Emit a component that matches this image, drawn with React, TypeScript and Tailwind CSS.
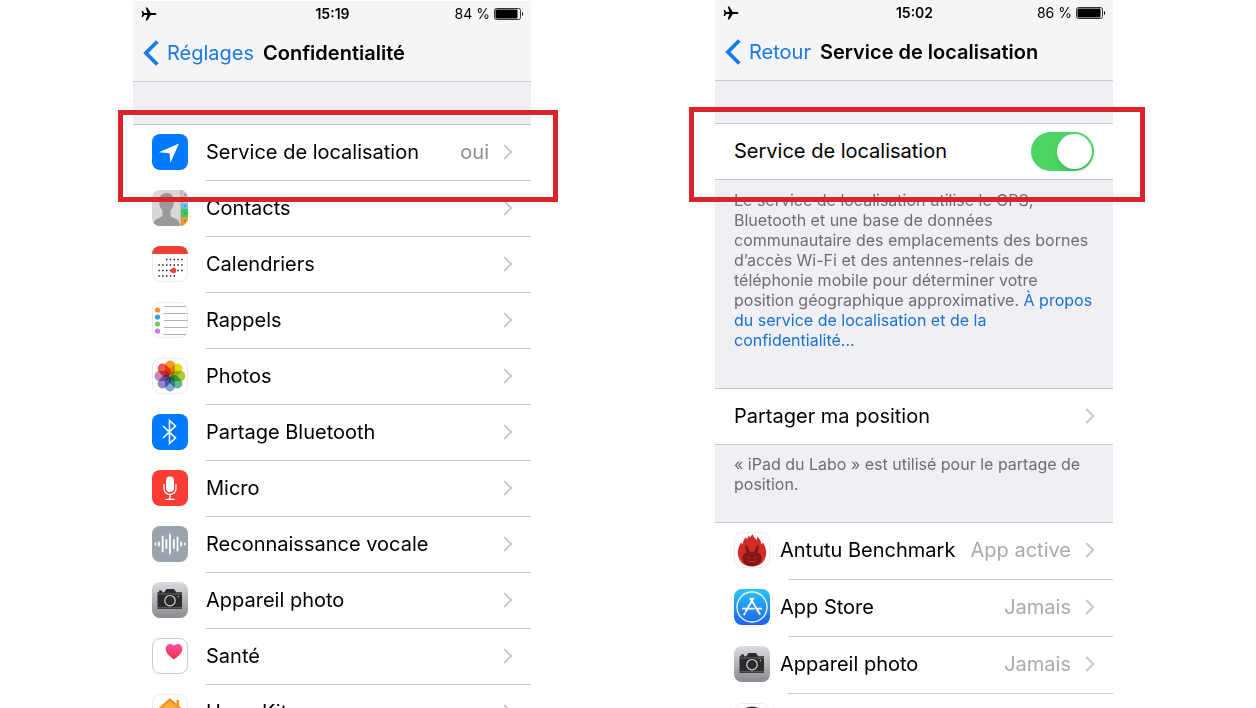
import React, { useState } from "react";

interface RowProps {
  icon?: React.ReactNode;
  label: string;
  value?: string;
  compact?: boolean;
}

interface HeaderProps {
  time: string;
  battery: string;
  level: number;
  back: string;
  title: string;
}

const LocationIcon = () => (
  <svg viewBox="0 0 36 36" className="size-9 shrink-0">
    <rect width="36" height="36" rx="8" fill="#027aff" />
    <path d="M27 9.5 7 18.3l10.6 1L18.3 29z" fill="#fff" />
  </svg>
);

const ContactsIcon = () => (
  <svg viewBox="0 0 36 36" className="size-9 shrink-0">
    <defs>
      <clipPath id="contacts-clip">
        <rect width="36" height="36" rx="8" />
      </clipPath>
    </defs>
    <g clipPath="url(#contacts-clip)">
      <rect width="36" height="36" fill="#d9d8d6" />
      <path
        d="M14.5 3c4.800 0 7.500 3.500 7.300 8.500-.1 4.500-1.300 7-3.300 9.200v4.300c0 1.500 1.500 2.300 4 3.200 3 1 5 2.300 5.500 7.800H1c.5-5.500 2.500-6.800 5.500-7.800 2.500-.9 4-1.700 4-3.200v-4.300c-2-2.200-3.200-4.700-3.300-9.200C7 6.500 9.700 3 14.500 3z"
        fill="#9a9997"
      />
      <rect x="29" width="7" height="13" fill="#c9c8c6" />
      <rect x="29" y="13" width="7" height="6" fill="#5ac8fa" />
      <rect x="29" y="19" width="7" height="8.500" fill="#3fc950" />
      <rect x="29" y="27.500" width="7" height="9" fill="#f59a23" />
      <path d="M29 0v36" stroke="#8c8b89" strokeWidth=".6" />
      <path d="M32 5h2M32 10h2M32 16h2M32 23h2M32 31h2" stroke="#6d6d6d" strokeWidth="1" />
    </g>
  </svg>
);

const CalendarIcon = () => (
  <svg viewBox="0 0 36 36" className="size-9 shrink-0">
    <rect x=".5" y=".5" width="35" height="35" rx="8" fill="#fff" stroke="#ececec" />
    <path d="M0 8a8 8 0 0 1 8-8h20a8 8 0 0 1 8 8z" fill="#ee4035" />
    <g stroke="#111" strokeWidth="1.400" strokeDasharray="1.400 2.400">
      <path d="M14 13.500h17" />
      <path d="M6.400 19h25" />
      <path d="M6.400 24.500h25" />
      <path d="M6.400 30h17" />
    </g>
    <circle cx="21.600" cy="24.500" r="2.700" fill="#ee4035" />
  </svg>
);

const RemindersIcon = () => (
  <svg viewBox="0 0 36 36" className="size-9 shrink-0">
    <rect x=".5" y=".5" width="35" height="35" rx="8" fill="#fff" stroke="#ececec" />
    <path d="M11.500 4.500H34M11.500 11.500h24M11.500 18.500h24M11.500 25.500h24M11.500 32.500H34" stroke="#b5b5b5" />
    <circle cx="5.500" cy="8" r="2.600" fill="#fb8c2d" />
    <circle cx="5.500" cy="15" r="2.600" fill="#38a2e0" />
    <circle cx="5.500" cy="22" r="2.600" fill="#73cb5c" />
    <circle cx="5.500" cy="29" r="2.600" fill="#c67bdc" />
  </svg>
);

const petals = ["#f79a1f", "#e8d70f", "#a5cd3d", "#5bbd8b", "#7fa8dc", "#9585c5", "#c987b8", "#ee5a50"];

const PhotosIcon = () => (
  <svg viewBox="0 0 36 36" className="size-9 shrink-0">
    <rect x=".5" y=".5" width="35" height="35" rx="8" fill="#fff" stroke="#ececec" />
    {petals.map((color, i) => (
      <rect
        key={color}
        x="13"
        y="2.500"
        width="10"
        height="15"
        rx="5"
        fill={color}
        transform={`rotate(${i * 45} 18 18)`}
        className="mix-blend-multiply"
      />
    ))}
  </svg>
);

const BluetoothIcon = () => (
  <svg viewBox="0 0 36 36" className="size-9 shrink-0">
    <rect width="36" height="36" rx="8" fill="#027aff" />
    <path d="m11 12 12.500 12-6 5.500V6.500l6 5.500L11 24" fill="none" stroke="#fff" strokeWidth="1.600" />
  </svg>
);

const MicIcon = () => (
  <svg viewBox="0 0 36 36" className="size-9 shrink-0">
    <rect width="36" height="36" rx="8" fill="#fc3d33" />
    <rect x="14" y="6.500" width="8" height="15.500" rx="4" fill="#fff" />
    <path d="M12 14v4.500a6 6 0 0 0 12 0V14M18 24.500V29M13.500 29.300h9" fill="none" stroke="#fff" strokeWidth="1.300" />
  </svg>
);

const SpeechIcon = () => (
  <svg viewBox="0 0 36 36" className="size-9 shrink-0">
    <rect width="36" height="36" rx="8" fill="#9ba3ad" />
    <path
      d="M3.500 17.500v1M7 16.500v3M10.700 10.500v15M14.400 14v8M18 8.500v19M21.800 14v8M25.500 11.500v13M29.200 16.500v3M32.700 17.500v1"
      stroke="#fff"
      strokeWidth="1.800"
      strokeLinecap="round"
    />
  </svg>
);

const CameraIcon = () => (
  <svg viewBox="0 0 36 36" className="size-9 shrink-0">
    <defs>
      <linearGradient id="camera-bg" x1="0" y1="0" x2="0" y2="1">
        <stop offset="0" stopColor="#dbdcde" />
        <stop offset="1" stopColor="#8a8b90" />
      </linearGradient>
    </defs>
    <rect width="36" height="36" rx="8" fill="url(#camera-bg)" />
    <path d="M7 8.600h3v1.600h2.300L14.500 7h7.500l2.200 3.200H30V27H5.500V10.200H7z" fill="#2b2b2d" />
    <path d="M5.500 12h24.500M5.500 25.800h24.500" stroke="#85868a" strokeWidth=".7" />
    <circle cx="18" cy="18.700" r="6.500" fill="#2b2b2d" />
    <circle cx="18" cy="18.700" r="5.200" fill="none" stroke="#d5d5d7" strokeWidth="1.200" />
    <circle cx="26.500" cy="14.600" r=".8" fill="#e5b33a" />
  </svg>
);

const HealthIcon = () => (
  <svg viewBox="0 0 36 36" className="size-9 shrink-0">
    <defs>
      <linearGradient id="heart" x1="0" y1="0" x2="0" y2="1">
        <stop offset="0" stopColor="#f94fa5" />
        <stop offset="1" stopColor="#f6303b" />
      </linearGradient>
    </defs>
    <rect x=".5" y=".5" width="35" height="35" rx="8" fill="#fff" stroke="#c9c9c9" />
    <path
      d="M22 21.500c-5.200-3.600-8.300-6.700-8.300-10.400 0-2.900 2-5.100 4.600-5.100 1.600 0 2.900.7 3.700 1.900C22.800 6.700 24.100 6 25.700 6c2.600 0 4.600 2.200 4.600 5.100 0 3.700-3.100 6.800-8.300 10.400z"
      fill="url(#heart)"
    />
  </svg>
);

const HomeIcon = () => (
  <svg viewBox="0 0 36 36" className="size-9 shrink-0">
    <rect x=".5" y=".5" width="35" height="35" rx="8" fill="#fff" stroke="#ececec" />
    <path d="M18 4 5 15.500V18h3v11h20V18h3v-2.500l-4-3.500V6h-2.500v3.700z" fill="#f0921f" />
    <path d="m18 7-9 8V26h18V15z" fill="#fbae3c" />
  </svg>
);

const AntutuIcon = () => (
  <svg viewBox="0 0 36 36" className="size-9 shrink-0">
    <rect x=".5" y=".5" width="35" height="35" rx="8" fill="#fff" stroke="#ececec" />
    <path
      d="M18.500 2c.5 2.500 2.500 4.200 4.200 6l.8-3.500c2.500 2.500 3.500 5.500 4 8l1.500-2c2.600 4.500 3.600 8.500 3 12.500C31 30 25.500 34.500 18 34.500S5 30 4 23c-.6-4 .4-8 3-12.500l1.500 2c.5-3 1.500-5.500 3.500-7.500l.8 2.500 2-4 1.200 2z"
      fill="#cf2d25"
    />
    <path
      d="M8.500 26c0-3 1.500-4.700 4.200-5.400l-1.500-5.800c-.4-1.600 1.600-2.200 2.300-.6l2 5.800c1.600-.3 3.400-.3 5 0l2-5.800c.7-1.600 2.700-1 2.300.6l-1.500 5.800c2.700.7 4.200 2.400 4.200 5.400 0 4.800-4 8-9.500 8s-9.500-3.200-9.500-8z"
      fill="#851417"
    />
    <path d="m13 25 3 1M23 25l-3 1M14.500 29c2.300 1 4.700 1 7 0" stroke="#c93a33" strokeWidth=".9" fill="none" />
  </svg>
);

const AppStoreIcon = () => (
  <svg viewBox="0 0 36 36" className="size-9 shrink-0">
    <defs>
      <linearGradient id="store-bg" x1="0" y1="0" x2="0" y2="1">
        <stop offset="0" stopColor="#2bc5f6" />
        <stop offset="1" stopColor="#1d62f0" />
      </linearGradient>
    </defs>
    <rect width="36" height="36" rx="8" fill="url(#store-bg)" />
    <circle cx="18" cy="18" r="15" fill="none" stroke="#fff" strokeWidth="1.300" />
    <g stroke="#fff" strokeWidth="1.800" strokeLinecap="round" fill="none">
      <path d="M19.200 9.500 11.800 22.500M10.800 24.300l-.7 1.200" />
      <path d="m16.500 9.500 9.300 15.500" />
      <path d="M8.800 19.700h11M24.300 19.700h3" />
    </g>
  </svg>
);

const CompassIcon = () => (
  <svg viewBox="0 0 36 36" className="size-9 shrink-0">
    <rect x=".5" y=".5" width="35" height="35" rx="8" fill="#fff" stroke="#ececec" />
    <circle cx="18" cy="18" r="13" fill="#fff" stroke="#333" strokeWidth="3" />
  </svg>
);

const Chevron = () => (
  <svg viewBox="0 0 10 16" className="h-4 w-2.5 shrink-0" fill="none" stroke="#c7c7cc" strokeWidth="2">
    <path d="m1.200 1 7 7-7 7" />
  </svg>
);

const Row = ({ icon, label, value, compact }: RowProps) => (
  <a
    href="#"
    className={`flex flex-1 items-center pr-[18px] pb-0.5 pl-[19px] ${compact ? "gap-2.5" : "gap-[18px]"}`}
  >
    {icon}
    <span className="flex-1 whitespace-nowrap">{label}</span>
    <span className="flex items-center gap-3.5">
      {value && (
        <span className={compact ? "text-[#aaaaae]" : "text-[#8e8e93]"}>{value}</span>
      )}
      <Chevron />
    </span>
  </a>
);

const Separator = () => <div className="ml-[73px] h-px bg-[#c8c7cc]" />;

const Header = ({ time, battery, level, back, title }: HeaderProps) => (
  <header className="border-b border-[#c8c7cc] bg-[#f5f5f7]">
    <div className="grid h-[26px] grid-cols-3 items-center pr-[7px] pl-2 text-sm">
      <svg viewBox="0 0 16 14" className="h-3.5 w-4">
        <path
          d="M15.500 7c0 .7-.9 1.100-2 1.100H9.800L6.300 13.500H4.700l1.700-5.400H3.300L1.900 9.900H.6L1.400 7 .6 4.100h1.300l1.400 1.800h3.100L4.700.5h1.600l3.500 5.400h3.700c1.100 0 2 .4 2 1.100z"
          fill="#000"
        />
      </svg>
      <span className="text-center font-semibold">{time}</span>
      <span className="flex items-center justify-end gap-1">
        {battery}
        <svg viewBox="0 0 30 12" className="h-3 w-[30px]">
          <rect x=".5" y=".5" width="26" height="11" rx="2" fill="none" stroke="#333" />
          <rect x="1.500" y="1.500" width={level} height="9" rx="1" fill="#000" />
          <path d="M28 4c1.500.5 1.500 3.500 0 4z" fill="#000" />
        </svg>
      </span>
    </div>
    <div className="flex h-[54px] items-center gap-[9px] pb-0.5 pl-2.5">
      <a href="#" className="flex items-center gap-2 text-[#1a7ae6]">
        <svg viewBox="0 0 16 26" className="h-[26px] w-4" fill="none" stroke="currentColor" strokeWidth="3.800">
          <path d="M14.300 1.500 2.900 13l11.400 11.500" />
        </svg>
        {back}
      </a>
      <h1 className="font-semibold whitespace-nowrap">{title}</h1>
    </div>
  </header>
);

const privacyItems = [
  { label: "Contacts", icon: <ContactsIcon /> },
  { label: "Calendriers", icon: <CalendarIcon /> },
  { label: "Rappels", icon: <RemindersIcon /> },
  { label: "Photos", icon: <PhotosIcon /> },
  { label: "Partage Bluetooth", icon: <BluetoothIcon /> },
  { label: "Micro", icon: <MicIcon /> },
  { label: "Reconnaissance vocale", icon: <SpeechIcon /> },
  { label: "Appareil photo", icon: <CameraIcon /> },
  { label: "Santé", icon: <HealthIcon /> },
  { label: "HomeKit", icon: <HomeIcon /> },
];

const apps = [
  { label: "Antutu Benchmark", value: "App active", icon: <AntutuIcon /> },
  { label: "App Store", value: "Jamais", icon: <AppStoreIcon /> },
  { label: "Appareil photo", value: "Jamais", icon: <CameraIcon /> },
  { label: "Boussole", value: "Jamais", icon: <CompassIcon /> },
];

const PrivacyScreen = () => (
  <section className="mt-px min-w-0 flex-1">
    <Header time="15:19" battery="84 %" level={22} back="Réglages" title="Confidentialité" />
    <div className="h-[43px] border-b border-[#c8c7cc] bg-[#efeff4]" />
    <ul>
      <li className="relative flex h-14 flex-col">
        <Row icon={<LocationIcon />} label="Service de localisation" value="oui" />
        <Separator />
        <div className="pointer-events-none absolute -top-[15px] -right-[27px] -bottom-[21px] -left-[15px] z-10 border-5 border-[#dc232c]" />
      </li>
      {privacyItems.map((item) => (
        <li key={item.label} className="flex h-14 flex-col">
          <Row {...item} />
          <Separator />
        </li>
      ))}
    </ul>
  </section>
);

const LocationScreen = () => {
  const [enabled, setEnabled] = useState(true);

  return (
    <section className="min-w-0 flex-1 bg-[#efeff4]">
      <Header time="15:02" battery="86 %" level={23} back="Retour" title="Service de localisation" />
      <div className="h-[42px]" />
      <div className="relative flex h-[57px] items-center justify-between border-y border-[#c8c7cc] bg-white px-[19px]">
        <label htmlFor="location" className="pb-0.5">
          Service de localisation
        </label>
        <input
          id="location"
          type="checkbox"
          role="switch"
          checked={enabled}
          onChange={() => setEnabled(!enabled)}
          className="h-[39px] w-[63px] cursor-pointer appearance-none rounded-full bg-[#d8d8dc] p-0.5 before:block before:size-[35px] before:rounded-full before:bg-white before:shadow-md checked:bg-[#4cd464] checked:before:ml-6"
        />
        <div className="pointer-events-none absolute -top-[17px] -right-8 -bottom-[23px] -left-[26px] z-10 border-5 border-[#dc232c]" />
      </div>
      <p className="px-[19px] pt-2.5 pb-[38px] text-base leading-5 text-[#6d6d72]">
        Le service de localisation utilise le GPS, Bluetooth et une base de données communautaire des
        emplacements des bornes d’accès Wi-Fi et des antennes-relais de téléphonie mobile pour déterminer
        votre position géographique approximative.{" "}
        <a href="#" className="text-[#1a72d0]">
          À propos du service de localisation et de la confidentialité...
        </a>
      </p>
      <div className="flex h-[57px] border-y border-[#c8c7cc] bg-white">
        <Row label="Partager ma position" />
      </div>
      <p className="px-[19px] pt-[9px] pb-7 text-base leading-5 text-[#6d6d72]">
        « iPad du Labo » est utilisé pour le partage de position.
      </p>
      <ul className="border-t border-[#c8c7cc] bg-white">
        {apps.map((app) => (
          <li key={app.label} className="flex h-[57px] flex-col">
            <Row {...app} compact />
            <Separator />
          </li>
        ))}
      </ul>
    </section>
  );
};

const App = () => {
  return (
    <main className="flex h-screen gap-[184px] overflow-hidden bg-white pr-[143px] pl-[133px] font-['Inter',sans-serif] text-xl text-black">
      <PrivacyScreen />
      <LocationScreen />
    </main>
  );
};

export default App;
